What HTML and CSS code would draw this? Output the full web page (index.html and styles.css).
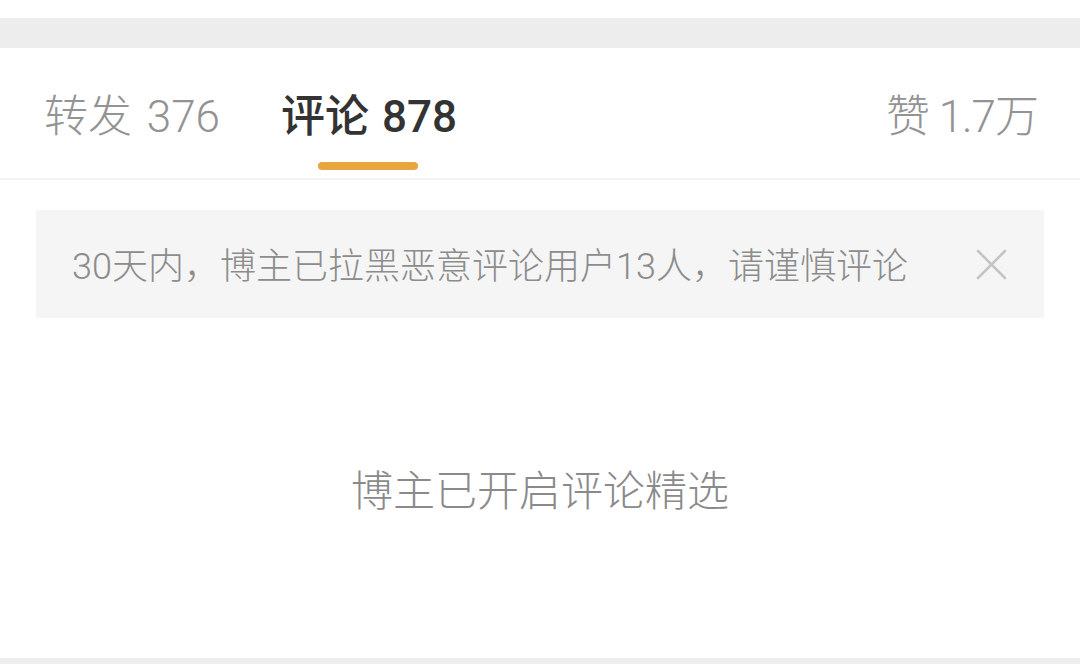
FILE: index.html
```html
<!DOCTYPE html>
<html lang="zh-CN">
<head>
<meta charset="utf-8">
<title>评论</title>
<link rel="stylesheet" href="styles.css">
</head>
<body>
<div class="page">
  <div class="top-gap"></div>
  <div class="band"></div>
  <nav class="tabs">
    <div class="tab">转发 376</div>
    <div class="tab tab-active">评论 878<span class="tab-bar"></span></div>
    <div class="tab tab-right">赞 1.7万</div>
  </nav>
  <div class="notice">
    <span class="notice-text">30天内，博主已拉黑恶意评论用户13人，请谨慎评论</span>
    <svg class="notice-close" width="31" height="31" viewBox="0 0 31 31">
      <path d="M2 2 L29 29 M29 2 L2 29" stroke="#c4c4c4" stroke-width="2.6" stroke-linecap="round" fill="none"/>
    </svg>
  </div>
  <div class="empty">博主已开启评论精选</div>
  <div class="bottom-band"></div>
</div>
</body>
</html>
```

FILE: styles.css
```css
html, body {
  margin: 0;
  padding: 0;
  background: #ffffff;
}

.page {
  width: 1080px;
  height: 664px;
  display: flex;
  flex-direction: column;
  font-family: "Roboto", "Noto Sans CJK SC", sans-serif;
  overflow: hidden;
}

.top-gap {
  height: 18px;
  background: #ffffff;
}

.band {
  height: 30px;
  background: #ededed;
}

.tabs {
  display: flex;
  align-items: flex-start;
  padding: 37px 42px 0 44px;
  height: 93px;
  border-bottom: 2px solid #f2f2f2;
  gap: 61px;
}

.tab {
  position: relative;
  font-size: 44px;
  line-height: 64px;
  font-weight: 300;
  color: #939393;
  white-space: nowrap;
  word-spacing: 4px;
}

.tab-active {
  color: #333333;
  font-weight: 500;
  word-spacing: 2px;
}

.tab-bar {
  position: absolute;
  left: 37px;
  top: 77px;
  width: 100px;
  height: 8px;
  border-radius: 4px;
  background: #eba53e;
}

.tab-right {
  margin-left: auto;
  letter-spacing: -1px;
  word-spacing: 0;
}

.notice {
  margin: 30px 36px 0 36px;
  height: 108px;
  background: #f5f5f5;
  display: flex;
  align-items: center;
  padding: 0 37px 0 36px;
}

.notice-text {
  flex: 1;
  font-size: 36px;
  line-height: 50px;
  font-weight: 300;
  color: #8c8c8c;
  white-space: nowrap;
  padding-top: 6px;
}

.notice-close {
  display: block;
}

.empty {
  margin-top: 144px;
  text-align: center;
  font-size: 42px;
  line-height: 60px;
  font-weight: 300;
  color: #8a8a8a;
}

.bottom-band {
  margin-top: auto;
  height: 6px;
  background: #ededed;
}
```
